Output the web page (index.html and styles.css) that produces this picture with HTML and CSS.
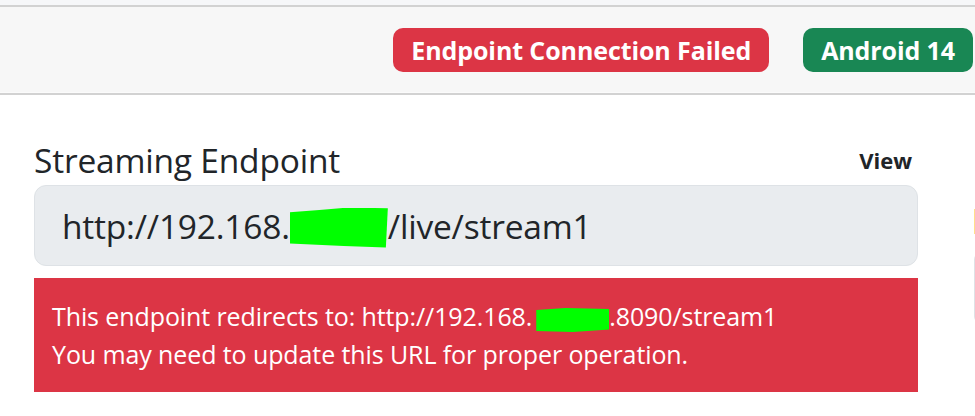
FILE: index.html
```html
<!DOCTYPE html>
<html lang="en">
<head>
<meta charset="utf-8">
<title>Streaming Endpoint</title>
<link rel="stylesheet" href="styles.css">
</head>
<body>
<div class="topstrip"></div>
<header class="header">
  <span class="badge badge-danger">Endpoint Connection Failed</span>
  <span class="badge badge-success">Android 14</span>
</header>
<main class="main">
  <section class="col-main">
    <div class="label-row">
      <label class="field-label">Streaming Endpoint</label>
      <span class="view-link">View</span>
    </div>
    <div class="input-box">http://192.168.<span class="redact redact-lg"></span>/live/stream1</div>
    <div class="alert">
      <div>This endpoint redirects to: http://192.168.<span class="redact redact-sm"></span>.8090/stream1</div>
      <div>You may need to update this URL for proper operation.</div>
    </div>
  </section>
  <aside class="col-side">
    <div class="side-flag"></div>
    <div class="side-card"></div>
  </aside>
</main>
</body>
</html>
```

FILE: styles.css
```css
html, body {
  margin: 0;
  padding: 0;
}
body {
  width: 975px;
  height: 416px;
  overflow: hidden;
  background: #ffffff;
  font-family: "Open Sans", "Noto Sans", sans-serif;
  color: #212529;
}
.topstrip {
  height: 5px;
  background: #f6f7f9;
  border-bottom: 2px solid #d2d2d2;
}
.header {
  height: 86px;
  background: #f7f7f7;
  border-bottom: 2px solid #d2d2d2;
  box-shadow: inset 0 -1px 0 #fbfbfb;
  display: flex;
  justify-content: flex-end;
  align-items: center;
  gap: 34px;
  padding-right: 2px;
}
.badge {
  display: inline-flex;
  align-items: center;
  height: 44px;
  padding: 0 18px;
  border-radius: 10px;
  color: #ffffff;
  font-weight: 700;
  font-size: 25px;
  letter-spacing: -0.1px;
  margin-top: -1px;
}
.badge-danger { background: #dc3545; }
.badge-success { background: #198754; }

.main {
  display: flex;
  gap: 56px;
  padding-left: 34px;
  overflow: hidden;
}
.col-main {
  width: 884px;
  flex: none;
  padding-top: 42px;
}
.label-row {
  display: flex;
  justify-content: space-between;
  align-items: center;
  padding-right: 6px;
  height: 46px;
  margin-bottom: 2px;
}
.field-label {
  font-size: 33.5px;
  letter-spacing: -0.2px;
  color: #212529;
}
.view-link {
  font-size: 22px;
  font-weight: 700;
  color: #212529;
}
.input-box {
  box-sizing: border-box;
  height: 81px;
  background: #e9ecef;
  border: 1px solid #dee2e6;
  border-radius: 12px;
  padding: 0 27px;
  display: flex;
  align-items: center;
  font-size: 33.5px;
  letter-spacing: -0.2px;
  color: #212529;
}
.redact {
  display: inline-block;
  background: #00ff00;
}
.redact-lg {
  width: 98px;
  height: 40px;
  margin-top: 4px;
  clip-path: polygon(0 12%, 30% 6%, 60% 0, 100% 2%, 98% 100%, 55% 96%, 0 90%);
}
.redact-sm {
  width: 73px;
  height: 24px;
  vertical-align: -6px;
  margin-left: 4px;
  clip-path: polygon(0 8%, 40% 0, 100% 4%, 100% 90%, 50% 100%, 0 96%);
}
.alert {
  margin-top: 12px;
  box-sizing: border-box;
  height: 114px;
  background: #dc3545;
  color: #ffffff;
  padding: 19px 18px;
  font-size: 25px;
  line-height: 38px;
  letter-spacing: -0.1px;
}
.col-side {
  flex: none;
  width: 1px;
  padding-top: 114px;
}
.side-flag {
  width: 6px;
  height: 25px;
  background: #ffe08a;
}
.side-card {
  margin-top: 18px;
  width: 20px;
  height: 70px;
  border: 1px solid #dee2e6;
  border-right: none;
  border-radius: 8px 0 0 8px;
}
```
